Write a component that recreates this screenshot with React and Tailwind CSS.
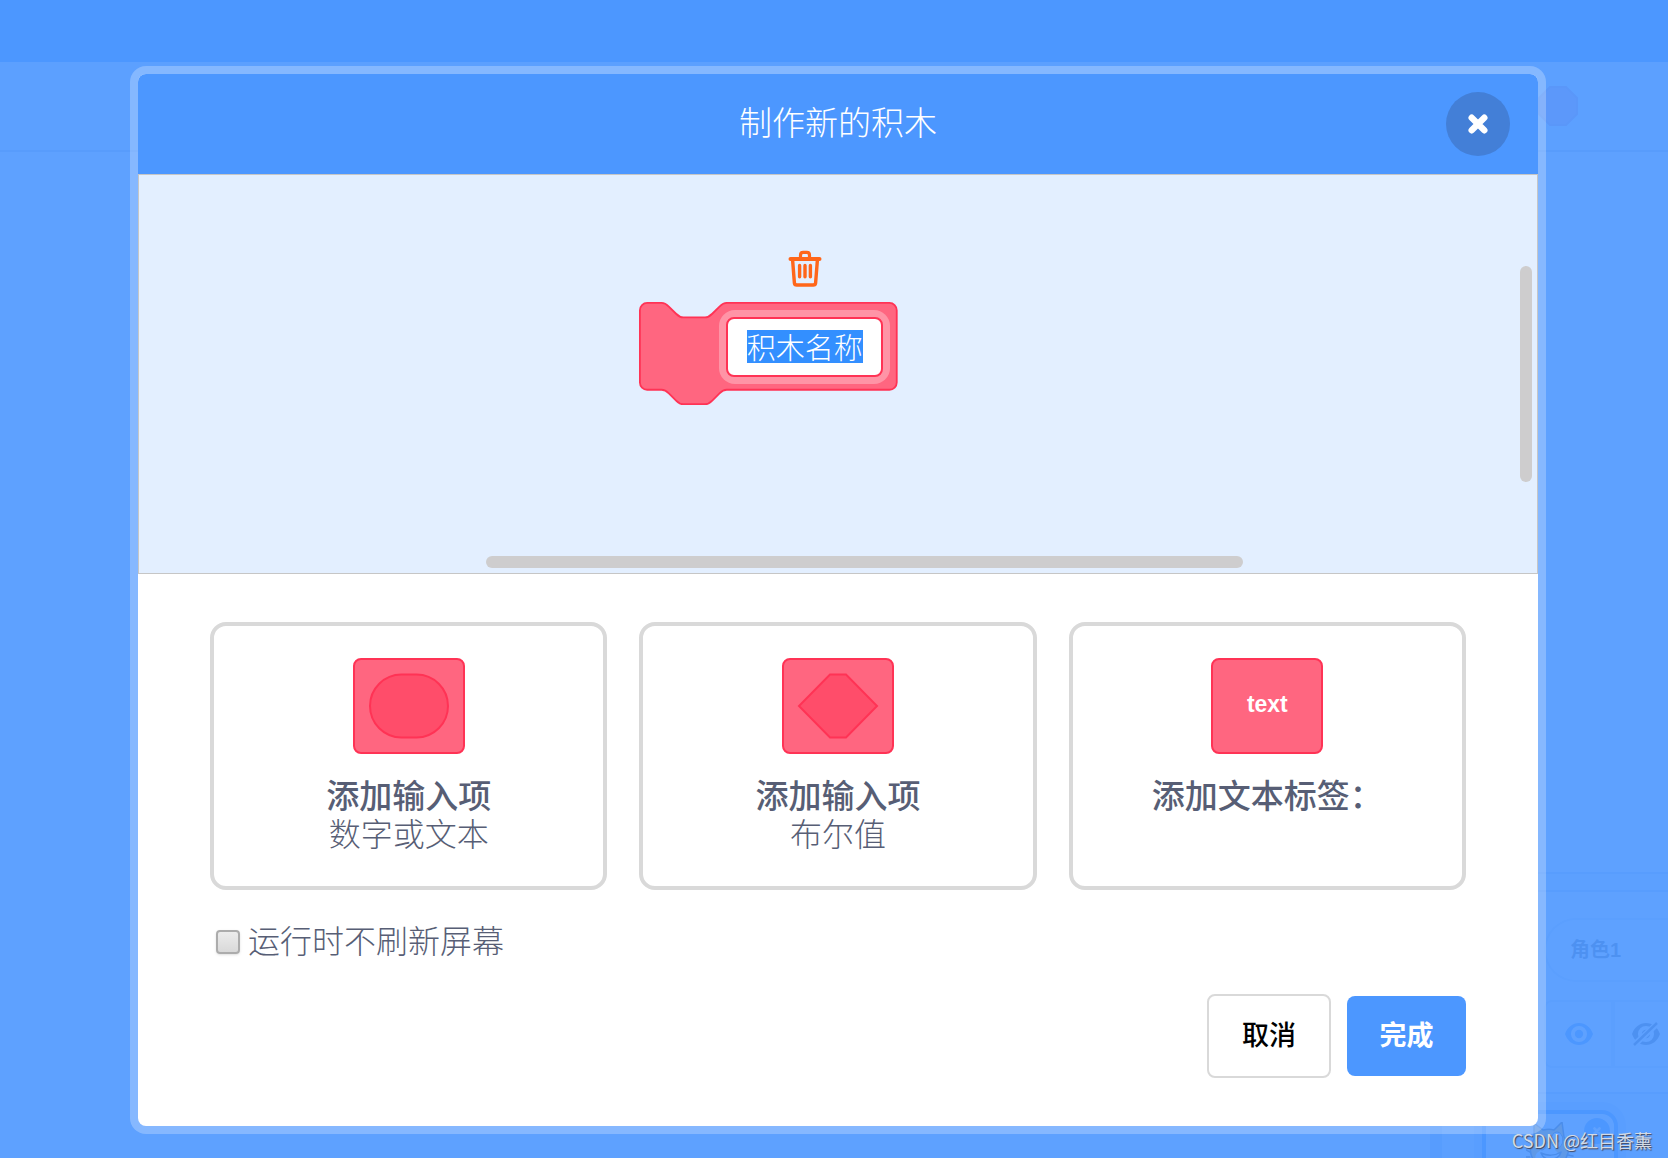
import React, { useState } from "react";

/* ===== DATA ===== */
const options = [
    { id: "number", title: "添加输入项", subtitle: "数字或文本", shape: "round" },
    { id: "boolean", title: "添加输入项", subtitle: "布尔值", shape: "hex" },
    { id: "label", title: "添加文本标签：", subtitle: "", shape: "text" },
];

/* ===== ICONS ===== */
const CloseIcon = ({ className }) => (
    <svg viewBox="0 0 20 20" className={className} fill="none" aria-hidden="true">
        <path d="M3.7 3.7l12.6 12.6M16.3 3.7L3.7 16.3" stroke="#fff" strokeWidth="6.4" strokeLinecap="round" />
    </svg>
);

const TrashIcon = ({ className }) => (
    <svg viewBox="0 0 34 38" className={className} fill="none" stroke="#ff661a" strokeLinecap="round" strokeLinejoin="round" aria-hidden="true">
        <path d="M2.5 9H31.5" strokeWidth="4" />
        <path d="M12.5 8V5.2Q12.5 2.4 15.2 2.4H18.8Q21.5 2.4 21.5 5.2V8" strokeWidth="3.2" />
        <path d="M4.6 10L6.4 33Q6.6 35 8.8 35H25.2Q27.4 35 27.6 33L29.4 10" strokeWidth="3.4" />
        <path d="M11.6 15.5V26.8M17 15.5V26.8M22.4 15.5V26.8" strokeWidth="3.4" />
    </svg>
);

const EyeIcon = ({ off, className }) => (
    <svg viewBox="0 0 28 24" className={className} aria-hidden="true">
        <path
            fillRule="evenodd"
            fill="currentColor"
            d="M14 1C7.5 1 2.5 5 0 12c2.5 7 7.5 11 14 11s11.5-4 14-11C25.5 5 20.5 1 14 1zM14 4a8 8 0 1 1 0 16a8 8 0 1 1 0-16z"
        />
        <circle cx="14" cy="12" r="4.2" fill="currentColor" />
        {off && (
            <>
                <path d="M1 24L27 0" stroke="#fff" strokeWidth="6" />
                <path d="M2 23L25 1" stroke="currentColor" strokeWidth="2.5" />
            </>
        )}
    </svg>
);

const CatIcon = ({ className }) => (
    <svg viewBox="0 0 48 48" className={className} strokeLinejoin="round" strokeLinecap="round" aria-hidden="true">
        <path d="M8 1l9 7c4-1 8-1 11 0l8-8 2 15c5 6 6 14 2 21-5 8-25 10-33 1-4-6-3-14 1-20z" fill="#ffab19" stroke="#333" strokeWidth="1.5" />
        <path d="M20 22c5-3 10 0 9 6 4 3 7 8 3 12-6 4-18 4-22-2-2-4 1-8 4-9 0-3 2-6 6-7z" fill="#fff" />
        <ellipse cx="31" cy="18" rx="6" ry="8" fill="#fff" stroke="#333" />
        <ellipse cx="16" cy="21" rx="5" ry="7" fill="#fff" stroke="#333" />
        <circle cx="32" cy="19" r="1.5" fill="#333" />
        <circle cx="18" cy="22" r="1.5" fill="#333" />
        <path d="M15 31c6 3 14 3 20-1-2 8-16 11-20 1zM4 30l-4-2M4 35H0M42 28l5-3M42 33l5 1" fill="none" stroke="#333" strokeWidth="1.5" />
    </svg>
);

const OptionIcon = ({ shape }) => (
    <span className="flex h-24 w-28 items-center justify-center rounded-lg border-2 border-[#ff3355] bg-[#ff6680]">
        {shape === "round" && (
            <svg viewBox="0 0 82 66" className="h-[66px] w-[82px]" aria-hidden="true">
                <rect x="2" y="1.5" width="78" height="63" rx="31.5" fill="#ff4d6a" stroke="#ff3355" strokeWidth="2" />
            </svg>
        )}
        {shape === "hex" && (
            <svg viewBox="0 0 82 66" className="h-[66px] w-[82px]" aria-hidden="true">
                <path d="M33 1.5H49L80 33L49 64.5H33L2 33Z" fill="#ff4d6a" stroke="#ff3355" strokeWidth="2" />
            </svg>
        )}
        {shape === "text" && (
            <span className="pb-1 font-['Liberation_Sans',sans-serif] text-[23px] font-bold text-white">text</span>
        )}
    </span>
);

/* ===== EDITOR BEHIND THE DIALOG ===== */
const EditorBackdrop = () => (
    <div className="absolute inset-0 flex flex-col overflow-hidden bg-[#e5f0ff]" aria-hidden="true">
        <div className="h-[62px] shrink-0 bg-[#4c97ff]" />
        <div className="flex h-[90px] shrink-0 items-center justify-end border-b-2 border-[#bccde0] pr-[90px]">
            <svg viewBox="0 0 40 40" className="h-10 w-10">
                <path d="M12 1H28L39 12V28L28 39H12L1 28V12Z" fill="#e5a5c8" stroke="#cf9bc4" strokeWidth="2" />
            </svg>
        </div>
        <div className="flex grow">
            <div className="grow bg-white" />
            <div className="w-3 border-r-2 border-[#b8cfee] bg-[#b5cdf0]" />
            <div className="flex w-[226px] flex-col">
                <div className="h-[722px] shrink-0 border-b-2 border-[#c4d7f0] bg-white" />
                <div className="mt-4 flex h-[202px] shrink-0 flex-col items-end overflow-hidden border-t-2 border-[#c4d7f0] bg-white">
                    <div className="mt-[26px] flex h-16 w-[124px] shrink-0 items-center rounded-l-full border-2 border-r-0 border-[#d9e3f2] pl-6 text-xl font-bold text-[#575e75]">
                        角色1
                    </div>
                    <div className="mt-[18px] flex h-[68px] w-[124px] shrink-0 rounded-l-lg border-2 border-r-0 border-[#d9e3f2]">
                        <div className="flex w-[65px] shrink-0 items-center justify-center text-[#4c97ff]">
                            <EyeIcon className="h-6 w-7" />
                        </div>
                        <div className="flex w-[66px] shrink-0 items-center justify-center border-l-4 border-[#d9e3f2] text-[#575e75]">
                            <EyeIcon off className="h-6 w-7" />
                        </div>
                    </div>
                </div>
                <div className="flex grow items-start border-t-2 border-[#c4d7f0] pt-4 pl-10">
                    <div className="relative flex h-32 w-[136px] items-start justify-center rounded-2xl border-4 border-[#4c97ff] bg-white pt-2 ring-8 ring-[#c8ddfb]">
                        <CatIcon className="h-12 w-12" />
                        <span className="absolute top-1 right-1 flex h-[26px] w-[26px] items-center justify-center rounded-full bg-[#4c97ff]">
                            <CloseIcon className="h-2 w-2" />
                        </span>
                    </div>
                </div>
            </div>
        </div>
    </div>
);

/* ===== BLOCK ON THE CANVAS ===== */
const BlockPreview = ({ name, onChange }) => (
    <div className="absolute top-[75px] left-[36%] -ml-[3px] h-[158px] w-[260px]">
        <button type="button" aria-label="删除" className="absolute top-0 left-[149px]">
            <TrashIcon className="h-[38px] w-[34px]" />
        </button>
        <svg viewBox="-0.5 -0.5 143.5 57.5" className="absolute top-[52px] left-0 h-[104px] w-[260px]" preserveAspectRatio="xMinYMin meet" aria-hidden="true">
            <path
                d="M0 4A4 4 0 0 1 4 0H12c2 0 3 1 4 2l4 4c1 1 2 2 4 2h12c2 0 3-1 4-2l4-4c1-1 2-2 4-2H138a4 4 0 0 1 4 4V44a4 4 0 0 1-4 4H48c-2 0-3 1-4 2l-4 4c-1 1-2 2-4 2h-12c-2 0-3-1-4-2l-4-4c-1-1-2-2-4-2H4a4 4 0 0 1-4-4Z"
                fill="#ff6680"
                stroke="#ff3355"
                strokeWidth="1"
            />
        </svg>
        <div className="absolute top-[60px] left-20 flex h-[74px] w-[171px] rounded-2xl bg-[#ff94a6] p-[7px]">
            <div className="flex w-full items-center justify-center rounded-lg border-2 border-[#ff3355] bg-white pb-0.5">
                <input
                    type="text"
                    aria-label="积木名称"
                    value={name}
                    onChange={onChange}
                    className="h-[33px] w-[116px] bg-[#338fff] text-center text-[29px] leading-8 font-light text-white outline-none"
                />
            </div>
        </div>
    </div>
);

const App = () => {
    const [name, setName] = useState("积木名称");
    const [noRefresh, setNoRefresh] = useState(false);

    return (
        <div className="relative min-h-screen overflow-hidden font-['Liberation_Sans','Noto_Sans_CJK_SC',sans-serif]">
            <EditorBackdrop />
            <div className="absolute inset-0 bg-[#4c97ff]/90" />

            {/* DIALOG */}
            <div className="relative pt-[66px] pr-[122px] pb-6 pl-[130px]">
                <div role="dialog" aria-labelledby="dialog-title" className="rounded-2xl bg-white/25 p-2">
                    <div className="overflow-hidden rounded-lg bg-white">
                        {/* HEADER */}
                        <div className="grid h-[100px] grid-cols-[1fr_auto_1fr] items-center bg-[#4c97ff] px-7">
                            <h1 id="dialog-title" className="col-start-2 text-[33px] leading-10 font-light text-white">
                                制作新的积木
                            </h1>
                            <button type="button" aria-label="关闭" className="flex h-16 w-16 items-center justify-center justify-self-end rounded-full bg-[#437fd7]">
                                <CloseIcon className="h-5 w-5" />
                            </button>
                        </div>

                        {/* CANVAS */}
                        <div className="relative h-[400px] border border-[#c6c6c6] bg-[#e3efff]">
                            <BlockPreview name={name} onChange={(e) => setName(e.target.value)} />
                            <div className="absolute top-[91px] right-[5px] h-[216px] w-3 rounded-full bg-[#cecdce]" />
                            <div className="absolute right-[294px] bottom-[5px] left-[347px] h-3 rounded-full bg-[#cecdce]" />
                        </div>

                        {/* OPTIONS */}
                        <div className="px-[72px] py-12 text-[#575e75]">
                            <div className="grid grid-cols-3 gap-8">
                                {options.map((option) => (
                                    <button
                                        key={option.id}
                                        type="button"
                                        className="flex flex-col items-center rounded-2xl border-4 border-[#d9d9d9] py-8"
                                    >
                                        <OptionIcon shape={option.shape} />
                                        <span className="mt-6 text-[33px] leading-[38px] font-medium">{option.title}</span>
                                        <span className="h-[38px] text-[32px] leading-[38px] font-light">{option.subtitle}</span>
                                    </button>
                                ))}
                            </div>

                            <label className="mt-8 flex h-10 items-center gap-2 pl-1.5 text-[32px] leading-10 font-light">
                                <input
                                    type="checkbox"
                                    checked={noRefresh}
                                    onChange={(e) => setNoRefresh(e.target.checked)}
                                    className="h-6 w-6 appearance-none rounded border-2 border-[#acacac] bg-linear-to-b from-[#ececec] to-[#d9d9d9] shadow-sm checked:from-[#4c97ff] checked:to-[#4c97ff]"
                                />
                                运行时不刷新屏幕
                            </label>

                            {/* ACTIONS */}
                            <div className="mt-8 flex items-center justify-end gap-4 text-[27px] leading-8">
                                <button type="button" className="h-[84px] w-[124px] rounded-lg border-2 border-[#d9d9d9] bg-white font-medium text-black">
                                    取消
                                </button>
                                <button type="button" className="h-20 w-[119px] rounded-lg bg-[#4c97ff] font-bold text-white">
                                    完成
                                </button>
                            </div>
                        </div>
                    </div>
                </div>
            </div>

            <p className="absolute right-4 bottom-1.5 font-['Noto_Sans_CJK_SC',sans-serif] text-lg leading-6 text-[#d3dbe6] [text-shadow:1px_1px_1px_#445]">
                CSDN @红目香薰
            </p>
        </div>
    );
};

export default App;
